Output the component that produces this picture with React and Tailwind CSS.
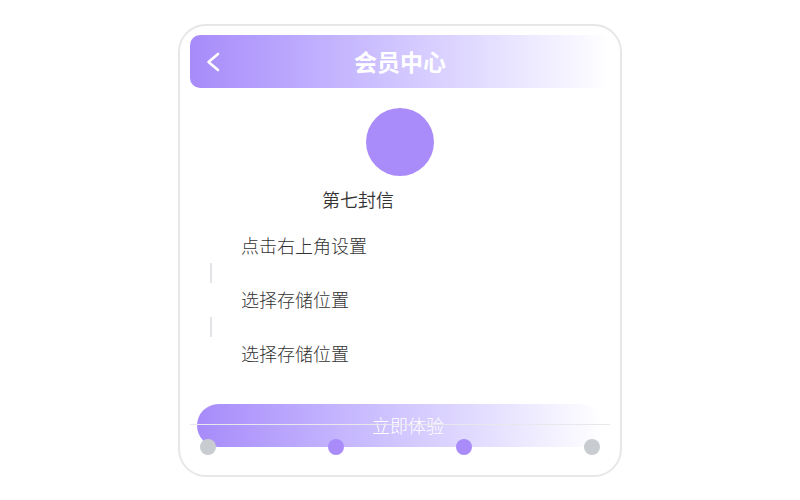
import React from 'react';

const steps = ['点击右上角设置', '选择存储位置', '选择存储位置'];
const dots = ['bg-[#c8ccd1]', 'bg-[#a98bfa]', 'bg-[#a98bfa]', 'bg-[#c8ccd1]'];

const App = () => {
    return (
        <div className="flex h-[500px] w-full items-center justify-center bg-white"
             style={{fontFamily: '"Noto Sans CJK SC", "Noto Sans", sans-serif'}}>
            <div className="flex h-[453px] w-[444px] flex-col rounded-[28px] border-2 border-[#e7e7ea] bg-white px-[10px] pt-[9px]">
                {/* header */}
                <div className="relative flex h-[53px] items-center justify-center rounded-[10px] bg-linear-to-r from-[#a78bfa] to-white">
                    <svg className="absolute left-[16px] top-[17px]" width="14" height="20" viewBox="0 0 14 20" fill="none">
                        <polyline points="12,2 2.5,10 12,18" stroke="white" strokeWidth="2.6" strokeLinecap="round" strokeLinejoin="round"/>
                    </svg>
                    <h1 className="text-[23px] font-bold leading-none text-white">会员中心</h1>
                </div>

                {/* avatar */}
                <div className="mt-[20px] flex justify-center">
                    <div className="h-[68px] w-[68px] rounded-full bg-[#a98bfa]"></div>
                </div>
                <div className="mt-[11px] pl-[132px] text-[18px] font-[350] leading-[24px] text-[#333]">第七封信</div>

                {/* steps */}
                <div className="mt-[18px] flex flex-col pl-[20px]">
                    {steps.map((s, i) => (
                        <div key={i}>
                            {i > 0 && <div className="h-[20px] w-[2px] bg-[#e3e4e8]"></div>}
                            <div className="flex h-[34px] items-center pl-[31px] text-[18px] font-light text-[#333]">{s}</div>
                        </div>
                    ))}
                </div>

                {/* button + progress */}
                <div className="relative mt-[33px]">
                    <button className="mx-[7px] flex h-[43px] w-[406px] items-center justify-center rounded-full bg-linear-to-r from-[#a78bfa] to-white pl-[16px] text-[18px] font-light text-white">
                        立即体验
                    </button>
                    <div className="absolute left-0 right-0 top-[20px]">
                        <div className="h-px w-full bg-[#e8e8ec]"></div>
                        <div className="mt-[14px] flex justify-between px-[10px]">
                            {dots.map((c, i) => (
                                <div key={i} className={'h-[16px] w-[16px] rounded-full ' + c}></div>
                            ))}
                        </div>
                    </div>
                </div>
            </div>
        </div>
    );
};

export default App;
